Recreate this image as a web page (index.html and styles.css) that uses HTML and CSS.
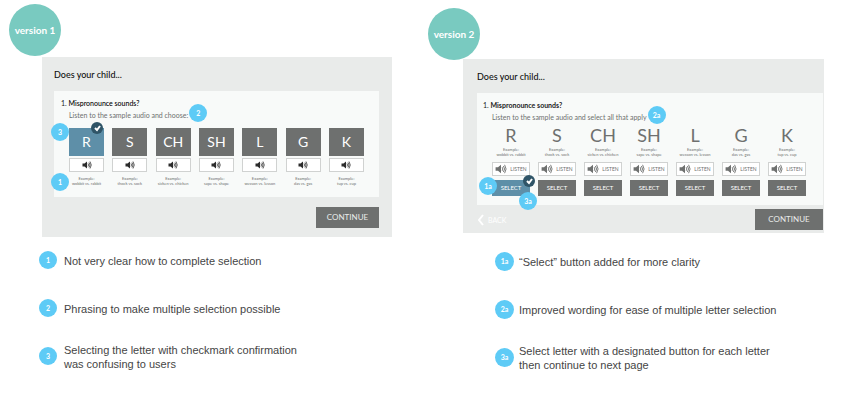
FILE: index.html
```
<!DOCTYPE html>
<html lang="en">
<head>
<meta charset="utf-8">
<title>Version comparison</title>
<link rel="stylesheet" href="styles.css">
</head>
<body>
<svg class="defs" aria-hidden="true">
  <symbol id="speaker" viewBox="0 0 20 16">
    <path d="M1 5h4l5-4v14l-5-4H1z" fill="currentColor"/>
    <path d="M12 5q2 3 0 6M14 3q4 5 0 10M16 1q5 7 0 14" fill="none" stroke="currentColor" stroke-width="1.5"/>
  </symbol>
  <symbol id="check" viewBox="0 0 12 12">
    <path d="M4 6l2 2 3-4" fill="none" stroke="#fff" stroke-width="2"/>
  </symbol>
</svg>
<main class="compare">
  <section class="version v1">
    <h2 class="badge">version 1</h2>
    <div class="mock">
      <h3 class="title">Does your child...</h3>
      <div class="panel">
        <p class="question">1. <b>Mispronounce sounds?</b></p>
        <p class="hint">Listen to the sample audio and choose:<span class="dot mark-hint">2</span></p>
        <div class="sounds">
          <div class="sound"><button class="tile chosen">R<svg class="check"><use href="#check"/></svg></button><button class="audio" aria-label="Listen to R"><svg class="speaker"><use href="#speaker"/></svg></button><p class="example">Example:<br>wobbit vs. rabbit</p><span class="dot mark-tile">3</span><span class="dot mark-example">1</span></div>
          <div class="sound"><button class="tile">S</button><button class="audio" aria-label="Listen to S"><svg class="speaker"><use href="#speaker"/></svg></button><p class="example">Example:<br>thock vs. sock</p></div>
          <div class="sound"><button class="tile">CH</button><button class="audio" aria-label="Listen to CH"><svg class="speaker"><use href="#speaker"/></svg></button><p class="example">Example:<br>sicken vs. chicken</p></div>
          <div class="sound"><button class="tile">SH</button><button class="audio" aria-label="Listen to SH"><svg class="speaker"><use href="#speaker"/></svg></button><p class="example">Example:<br>sape vs. shape</p></div>
          <div class="sound"><button class="tile">L</button><button class="audio" aria-label="Listen to L"><svg class="speaker"><use href="#speaker"/></svg></button><p class="example">Example:<br>wesson vs. lesson</p></div>
          <div class="sound"><button class="tile">G</button><button class="audio" aria-label="Listen to G"><svg class="speaker"><use href="#speaker"/></svg></button><p class="example">Example:<br>das vs. gas</p></div>
          <div class="sound"><button class="tile">K</button><button class="audio" aria-label="Listen to K"><svg class="speaker"><use href="#speaker"/></svg></button><p class="example">Example:<br>tup vs. cup</p></div>
        </div>
      </div>
      <div class="actions"><button class="continue">CONTINUE</button></div>
    </div>
    <ul class="notes">
      <li><span class="dot">1</span><p>Not very clear how to complete selection</p></li>
      <li><span class="dot">2</span><p>Phrasing to make multiple selection possible</p></li>
      <li><span class="dot">3</span><p>Selecting the letter with checkmark confirmation<br>was confusing to users</p></li>
    </ul>
  </section>
  <section class="version v2">
    <h2 class="badge">version 2</h2>
    <div class="mock">
      <h3 class="title">Does your child...</h3>
      <div class="panel">
        <p class="question">1. <b>Mispronounce sounds?</b></p>
        <p class="hint">Listen to the sample audio and select all that apply<span class="dot mark-hint">2a</span></p>
        <div class="sounds">
          <div class="sound"><p class="letter">R</p><p class="example">Example:<br>wobbit vs. rabbit</p><button class="audio"><svg class="speaker"><use href="#speaker"/></svg>LISTEN</button><button class="select chosen">SELECT<svg class="check"><use href="#check"/></svg></button><span class="dot mark-select">1a</span><span class="dot mark-check">3a</span></div>
          <div class="sound"><p class="letter">S</p><p class="example">Example:<br>thock vs. sock</p><button class="audio"><svg class="speaker"><use href="#speaker"/></svg>LISTEN</button><button class="select">SELECT</button></div>
          <div class="sound"><p class="letter">CH</p><p class="example">Example:<br>sicken vs. chicken</p><button class="audio"><svg class="speaker"><use href="#speaker"/></svg>LISTEN</button><button class="select">SELECT</button></div>
          <div class="sound"><p class="letter">SH</p><p class="example">Example:<br>sape vs. shape</p><button class="audio"><svg class="speaker"><use href="#speaker"/></svg>LISTEN</button><button class="select">SELECT</button></div>
          <div class="sound"><p class="letter">L</p><p class="example">Example:<br>wesson vs. lesson</p><button class="audio"><svg class="speaker"><use href="#speaker"/></svg>LISTEN</button><button class="select">SELECT</button></div>
          <div class="sound"><p class="letter">G</p><p class="example">Example:<br>das vs. gas</p><button class="audio"><svg class="speaker"><use href="#speaker"/></svg>LISTEN</button><button class="select">SELECT</button></div>
          <div class="sound"><p class="letter">K</p><p class="example">Example:<br>tup vs. cup</p><button class="audio"><svg class="speaker"><use href="#speaker"/></svg>LISTEN</button><button class="select">SELECT</button></div>
        </div>
      </div>
      <div class="actions"><button class="back"><svg class="chevron" viewBox="0 0 7 12"><path d="M6 1L2 6l4 5" fill="none" stroke="#fff" stroke-width="2"/></svg>BACK</button><button class="continue">CONTINUE</button></div>
    </div>
    <ul class="notes">
      <li><span class="dot">1a</span><p>“Select” button added for more clarity</p></li>
      <li><span class="dot">2a</span><p>Improved wording for ease of multiple letter selection</p></li>
      <li><span class="dot">3a</span><p>Select letter with a designated button for each letter<br>then continue to next page</p></li>
    </ul>
  </section>
</main>
</body>
</html>
```
FILE: styles.css
```
* { box-sizing: border-box; }
body { margin: 0; background: #fff; font-family: Lato, sans-serif; color: #6e706f; }
h2, h3, p, ul { margin: 0; padding: 0; font-weight: 400; }
ul { list-style: none; }
button { display: block; margin: 0; padding: 0; border: 0; border-radius: 0; font-family: inherit; color: #fff; background: #6e706f; }
.defs { position: absolute; width: 0; height: 0; }

.compare { display: grid; grid-template-columns: 1fr 1fr; }
.version { position: relative; }
.v1 { padding: 57px 36px 0 42px; }
.v2 { padding: 59px 32px 0 35px; }

.badge {
  position: absolute; width: 52px; height: 52px; border-radius: 50%;
  background: #79cac0; color: #fff;
  font-size: 10px; font-weight: 700; line-height: 52px; text-align: center; white-space: nowrap;
}
.v1 .badge { left: 9px; top: 4px; }
.v2 .badge { left: 0; top: 8px; }

.mock { background: #e9ebea; }
.v1 .mock { padding: 10px 13px 9px 12px; }
.v2 .mock { padding: 10px 1px 3px 14px; }
.title { margin-bottom: 8px; font-size: 9px; font-weight: 500; line-height: 16px; color: #111; }

.panel { background: #f8faf9; }
.v1 .panel { padding: 6px 15px 11px; }
.v2 .panel { padding: 6px 17px 9px 15px; }
.question { font-size: 7px; line-height: 12px; color: #1c1c1c; }
.question b { font-weight: 700; }
.v1 .question { margin-left: -8px; }
.v1 .question b { font-weight: 500; color: #000; }
.v2 .question { margin-left: -9px; }
.hint { position: relative; width: max-content; font-size: 7px; line-height: 12px; }

.dot {
  flex: none; width: 18px; height: 18px; border-radius: 50%;
  background: #5ecbf6; color: #fff;
  font-size: 7px; font-weight: 700; line-height: 18px; text-align: center;
}
.mark-hint, .mark-tile, .mark-example, .mark-select, .mark-check { position: absolute; }
.mark-hint { left: calc(100% + 1px); top: -5px; }
.mark-tile { left: -18px; top: -5px; }
.mark-example { left: -18px; top: 45px; }
.mark-select { left: -13px; top: 52px; }
.mark-check { left: 27px; top: 67px; }

.sounds { display: flex; justify-content: space-between; margin-top: 2px; }
.v1 .sounds { margin-top: 7px; }
.sound { position: relative; display: flex; flex-direction: column; align-items: center; }
.v1 .sound { width: 35px; gap: 2px; }
.v2 .sound { width: 38px; }
.tile { position: relative; width: 100%; height: 28px; font-size: 14px; line-height: 28px; }
.select { position: relative; width: 100%; height: 16px; margin-top: 4px; font-size: 6px; line-height: 16px; }
.tile.chosen, .select.chosen { background: #5e8fa8; }
.check { position: absolute; width: 12px; height: 12px; right: 1px; top: -6px; border-radius: 50%; background: #2f5467; }
.select .check { top: -5px; right: -5px; }
.audio { display: flex; align-items: center; justify-content: center; gap: 3px; width: 100%; height: 14px; border: 1px solid #d0d2d1; background: #fff; color: #6e706f; font-size: 5px; }
.speaker { width: 10px; height: 8px; flex: none; }
.v2 .speaker { width: 12px; height: 10px; }
.v1 .audio { color: #2b2b2b; }
.letter { font-size: 18px; line-height: 20px; }
.example { font-size: 4px; line-height: 5px; text-align: center; white-space: nowrap; }
.v1 .example { margin-top: 2px; }
.v2 .example { margin: 2px 0 5px; }

.actions { display: flex; align-items: center; justify-content: flex-end; }
.v1 .actions { margin-top: 10px; }
.v2 .actions { margin-top: 4px; }
.continue { height: 21px; font-size: 8px; line-height: 21px; color: #e9ebea; }
.v1 .continue { width: 63px; }
.v2 .continue { width: 68px; }
.back { display: flex; align-items: center; gap: 4px; margin-right: auto; background: none; font-size: 7px; line-height: 12px; }
.chevron { width: 7px; height: 12px; }

.notes { display: grid; gap: 2px; font-family: "Liberation Sans", Arial, sans-serif; font-size: 11px; line-height: 14px; color: #454545; }
.notes li { display: flex; align-items: center; min-height: 46px; gap: 7px; }
.notes p { padding-top: 2px; }
.v1 .notes { margin-left: -3px; }
.v2 .notes { margin: 5px 0 0 32px; }
.notes .dot { font-family: Lato, sans-serif; }
.v2 .notes .dot { width: 19px; height: 19px; line-height: 19px; }
.v2 .notes li { gap: 5px; }
```
